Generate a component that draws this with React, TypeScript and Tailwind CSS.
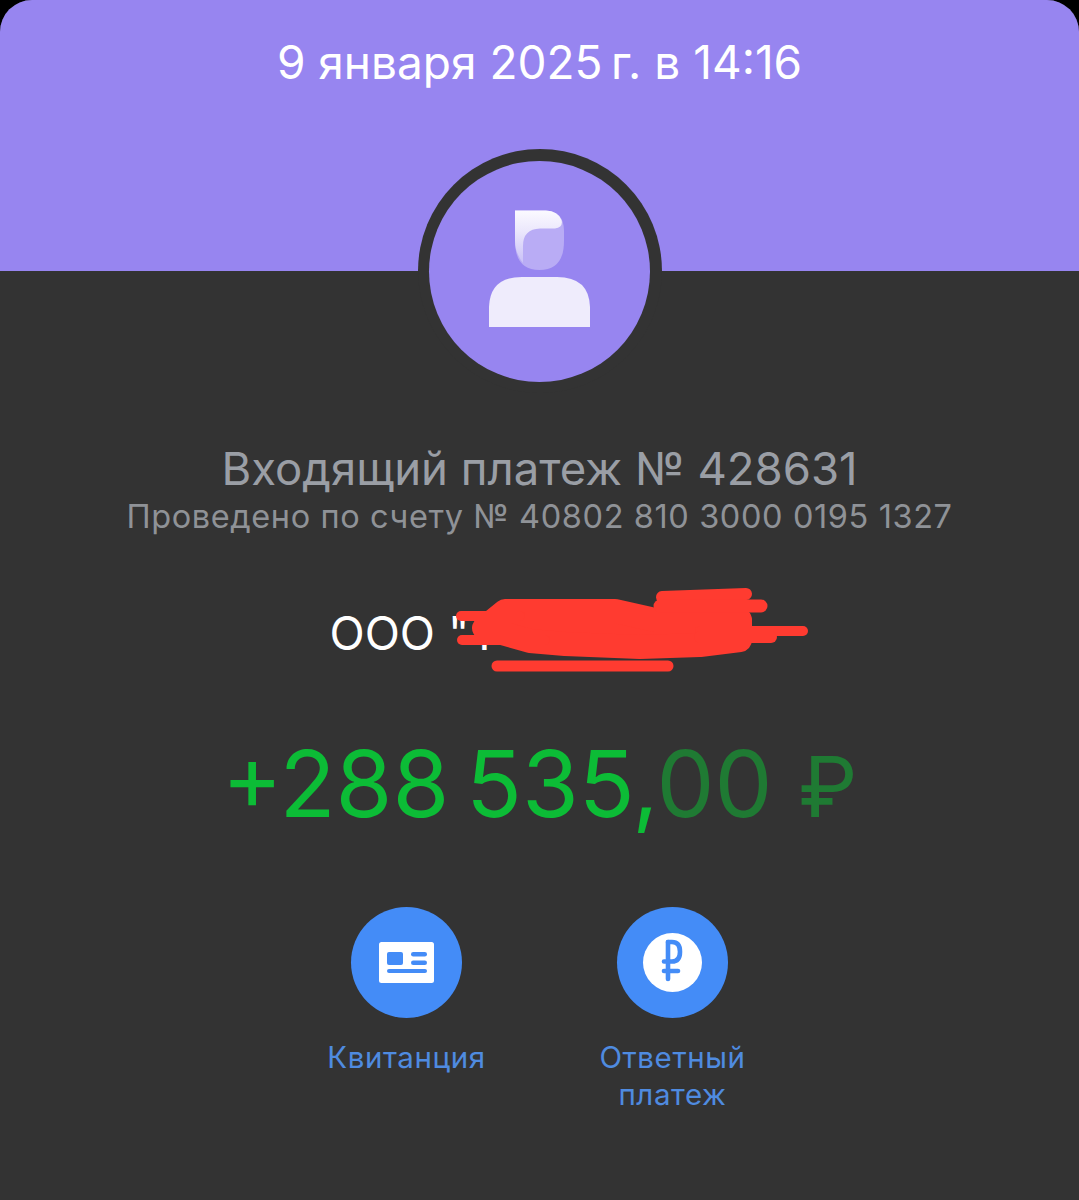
const font = { fontFamily: 'Inter, "Noto Sans", sans-serif' };

// Default avatar: head with a light fringe, plus shoulders
function Avatar() {
  return (
    <svg width="221" height="221" viewBox="429 160 221 221" fill="none">
      <defs>
        <linearGradient id="fringe" x1="0" y1="0" x2="0" y2="1">
          <stop offset="0" stopColor="#fbfaff" />
          <stop offset="0.4" stopColor="#ebe7fc" />
          <stop offset="1" stopColor="#c9c0f7" />
        </linearGradient>
      </defs>
      <path d="M515 209.500H545Q564 210 564 230V240Q564 269 539.500 269Q515 269 515 240Z" fill="#b9acf5" />
      <path d="M515 209.500H546Q558 210 561.500 219Q563.500 226 555 227.500H540Q523 228 523 245V262Q515 252 515 240Z" fill="url(#fringe)" />
      <path d="M489 326V306Q490 276 522 276H557Q589 276 590 306V326Z" fill="#efecfc" />
    </svg>
  );
}

function ReceiptIcon() {
  return (
    <svg width="55" height="41" viewBox="0 0 55 41">
      <rect width="55" height="41" rx="2.500" fill="#fff" />
      <rect x="8" y="10" width="16" height="13" rx="2" fill="#448cf7" />
      <rect x="32" y="10" width="16" height="4.500" rx="2.250" fill="#448cf7" />
      <rect x="32" y="18.500" width="16" height="4.500" rx="2.250" fill="#448cf7" />
      <rect x="8" y="27" width="40" height="4" rx="2" fill="#448cf7" />
    </svg>
  );
}

function RubleIcon() {
  return (
    <div className="flex h-[59px] w-[59px] items-center justify-center rounded-full bg-white">
      <svg width="59" height="59" viewBox="0 0 59 59" fill="none" stroke="#448cf7" strokeWidth="4.600" strokeLinecap="round" strokeLinejoin="round">
        <path d="M25 9V46" />
        <path d="M25 9H29Q37 9 37 18.700Q37 28.500 29 28.500H21" />
        <path d="M21 38H35" />
      </svg>
    </div>
  );
}

// Red marker strokes over the company name
function Scribble() {
  return (
    <svg className="absolute left-[455px] top-[586px]" width="360" height="90" viewBox="455 586 360 90" fill="none" stroke="#ff3b30" strokeLinecap="round" strokeLinejoin="round">
      <path d="M505 611H615L655 620H740V640L700 645L640 647L565 644L530 641L484 628Z" fill="#ff3b30" strokeWidth="24" />
      <path d="M662 597L746 594" strokeWidth="12" />
      <path d="M660 606H761" strokeWidth="13" />
      <path d="M461 616H520" strokeWidth="10" />
      <path d="M462 640H545" strokeWidth="10" />
      <path d="M700 631H803" strokeWidth="10" />
      <path d="M700 637H771" strokeWidth="12" />
      <path d="M497 666H668" strokeWidth="11" />
    </svg>
  );
}

function Action({ label, children }: { label: string; children: React.ReactNode }) {
  return (
    <div className="flex w-[266px] flex-col items-center">
      <div className="flex h-[111px] w-[111px] items-center justify-center rounded-full bg-[#448cf7]">{children}</div>
      <p className="mt-[21px] w-[200px] whitespace-pre-line text-center text-[29.500px] leading-[37px] tracking-[0.6px] text-[#4f8be0]">{label}</p>
    </div>
  );
}

export default function App() {
  return (
    <div className="relative h-[1200px] w-[1079px] overflow-hidden bg-black" style={font}>
      <div className="h-full overflow-hidden rounded-t-[32px] bg-[#333333]">
        <header className="h-[271px] bg-[#9785f0] pt-[33px] text-center text-[46px] leading-[58px] text-white">
          9 января 2025{'\u2009'}г. в 14:16
        </header>

        <div className="flex flex-col items-center">
          <div className="-mt-[122px] flex h-[244px] w-[244px] items-center justify-center rounded-full bg-[#333333]">
            <div className="flex h-[221px] w-[221px] items-center justify-center rounded-full bg-[#9785f0]">
              <Avatar />
            </div>
          </div>

          <h1 className="mt-[48px] text-[45.500px] leading-[56px] text-[#9a9ea5]">Входящий платеж № 428631</h1>
          <p className="text-[32.500px] leading-[40px] tracking-[0.6px] text-[#8f9297]">
            Проведено по счету № 40802 810 3000 0195 1327
          </p>

          <div className="mt-[67px] flex w-[420px] justify-between text-[46px] leading-[58px] text-white">
            <span>ООО "Т</span>
            <span>"</span>
          </div>

          <p className="mt-[70px] text-[92px] leading-[104px] text-[#0cbc36]">
            +288{'\u2009'}535,<span className="text-[#1f7a33]">00 <span className="text-[84px]">₽</span></span>
          </p>

          <div className="mt-[68px] flex justify-center">
            <Action label="Квитанция">
              <ReceiptIcon />
            </Action>
            <Action label={'Ответный\nплатеж'}>
              <RubleIcon />
            </Action>
          </div>
        </div>
      </div>
      <Scribble />
    </div>
  );
}
